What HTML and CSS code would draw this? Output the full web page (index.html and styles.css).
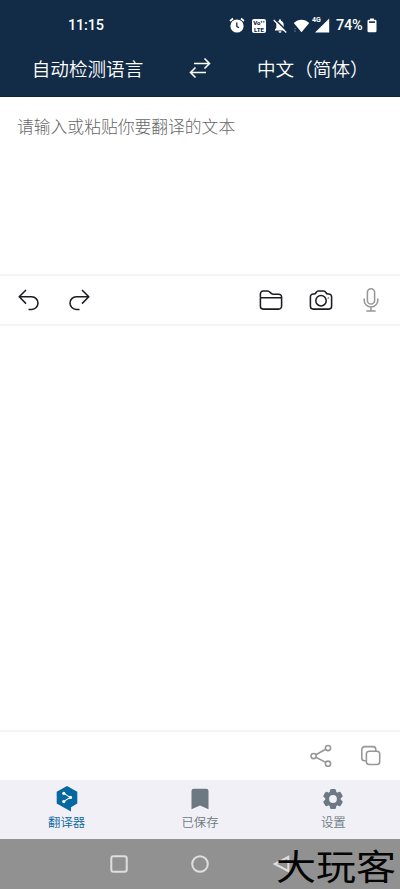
FILE: index.html
```html
<!DOCTYPE html>
<html lang="zh-CN">
<head>
<meta charset="utf-8">
<meta name="viewport" content="width=device-width, initial-scale=1">
<title>翻译器</title>
<link rel="stylesheet" href="styles.css">
</head>
<body>
<div class="app">
  <header class="header">
    <div class="status">
      <time class="clock">11:15</time>
      <div class="status-icons">
        <svg class="alarm" width="16" height="17" viewBox="0 0 16 17"><circle cx="8" cy="9" r="6.6" fill="#fff"/><path d="M1 4 4 1.5M15 4 12 1.5" stroke="#fff" stroke-width="1.7"/><path d="M7.8 5.5v3.8l2.2 1.5" fill="none" stroke="#122b46" stroke-width="1.3"/></svg>
        <span class="volte"><span>Vo¹¹</span><span>LTE</span></span>
        <svg class="bell" width="16" height="16" viewBox="0 0 16 16"><path d="M3 12.5v-1.2l1.3-1.3V6.8c0-2 1.1-3.5 2.7-4V1.5h2v1.3c1.6.5 2.7 2 2.7 4V10l1.3 1.3v1.2zM6.5 13.2h3a1.5 1.5 0 0 1-3 0z" fill="#fff"/><path d="M3 1.2 15.2 13.4" stroke="#122b46" stroke-width="1.5"/><path d="M1.7 2 14.2 14.5" stroke="#fff" stroke-width="1.3"/></svg>
        <svg class="wifi" width="17" height="14" viewBox="0 0 17 14"><path d="M.8 4.1C5-.4 12-.4 16.2 4.1L8.5 13.3z" fill="#fff"/><path d="M2 9v1.3M2 11.5v1.3" stroke="#8192a3"/></svg>
        <span class="signal"><svg width="16" height="15" viewBox="0 0 16 15"><path d="M15.2.5v14H1z" fill="#fff"/></svg><span class="network">4G</span></span>
        <span class="percent">74%</span>
        <svg class="battery" width="10" height="15" viewBox="0 0 10 15"><path d="M3 .5h4v1.3h1.2A1.3 1.3 0 0 1 9.5 3v10a1.3 1.3 0 0 1-1.3 1.3H1.8A1.3 1.3 0 0 1 .5 13V3a1.3 1.3 0 0 1 1.3-1.2H3z" fill="#fff"/><path d="M2 3.3h6v1.6H2z" fill="#122b46"/></svg>
      </div>
    </div>
    <div class="languages">
      <button class="lang source">自动检测语言</button>
      <svg class="swap" width="22" height="22" viewBox="0 0 22 22"><path d="M5 6.5h15.5M15.5 1.5l5 5-5 5M17 15.5H1.5M6.5 10.5l-5 5 5 5"/></svg>
      <button class="lang target">中文（简体）</button>
    </div>
  </header>
  <main class="editor">
    <p class="placeholder">请输入或粘贴你要翻译的文本</p>
    <div class="toolbar">
      <svg class="undo" width="24" height="24" viewBox="0 0 24 24"><path d="M9 2 2.2 8.8 9 15.6M2.5 8.8h12.2a6.3 6.3 0 0 1 0 12.6H11.5"/></svg>
      <svg class="redo" width="24" height="24" viewBox="0 0 24 24"><path d="m15 2 6.8 6.8-6.8 6.8M21.5 8.8H9.3a6.3 6.3 0 0 0 0 12.6h3.2"/></svg>
      <svg class="folder" width="24" height="24" viewBox="0 0 24 24"><path d="M1.4 9V5.8A2.8 2.8 0 0 1 4.2 3h4.3c2.7 0 3 3.2 5.6 3.2h5.7A2.8 2.8 0 0 1 22.6 9v9.3a2.8 2.8 0 0 1-2.8 2.8H4.2a2.8 2.8 0 0 1-2.8-2.8V9.8h21"/></svg>
      <svg class="camera" width="24" height="24" viewBox="0 0 24 24"><path d="M1.4 8.8A2.8 2.8 0 0 1 4.2 6h1c2 0 2-3 4-3h5.6c2 0 2 3 4 3h1a2.8 2.8 0 0 1 2.8 2.8v9.5a2.8 2.8 0 0 1-2.8 2.8H4.2a2.8 2.8 0 0 1-2.8-2.8z"/><circle cx="12" cy="12.7" r="5.2"/><path d="M18.8 10h.8"/></svg>
      <svg class="mic muted" width="24" height="26" viewBox="0 0 24 26"><rect x="8.4" y="1.7" width="7.2" height="15.3" rx="3.6"/><path d="M5.2 11.5v1.7a6.8 6.8 0 0 0 13.6 0v-1.7M12 20v4M7.3 24h9.4"/></svg>
    </div>
  </main>
  <section class="output">
    <div class="toolbar output-tools">
      <svg class="share muted" width="24" height="24" viewBox="0 0 24 24"><circle cx="4.6" cy="12" r="2.6"/><circle cx="19" cy="4" r="2.6"/><circle cx="19" cy="19.7" r="2.6"/><path d="m6.9 10.7 9.8-5.4M6.9 13.3l9.8 5.1"/></svg>
      <svg class="copy muted" width="24" height="24" viewBox="0 0 24 24"><path d="M6.9 16.8H5.6A2.8 2.8 0 0 1 2.8 14V5.4a2.8 2.8 0 0 1 2.8-2.8h8.4a2.8 2.8 0 0 1 2.8 2.8v1.5"/><rect x="7.4" y="7.2" width="13.3" height="13.3" rx="2.8"/></svg>
    </div>
  </section>
  <nav class="tabs">
    <a class="tab active"><svg width="22" height="26" viewBox="0 0 22 26"><path d="M11 0 21.3 5.8v11.6L15 21.2V25.5L.7 17.4V5.8z" fill="#0767a0"/><path d="m7.8 7.4 6.4 4-6.4 4" fill="none" stroke="#fff" stroke-width="1.1"/><g fill="#fff"><circle cx="7.8" cy="7.3" r="1.6"/><circle cx="14.5" cy="11.4" r="1.6"/><circle cx="7.8" cy="15.6" r="1.6"/></g></svg><span>翻译器</span></a>
    <a class="tab"><svg width="22" height="26" viewBox="0 0 22 26"><path d="M2.5 5a2.3 2.3 0 0 1 2.3-2.3h12.4A2.3 2.3 0 0 1 19.5 5v18.3L11 19.4l-8.5 3.9z" fill="#6c7982"/></svg><span>已保存</span></a>
    <a class="tab"><svg width="26" height="26" viewBox="0 0 26 26"><g fill="#6c7982"><circle cx="13" cy="13" r="7.8"/><g id="teeth"><rect x="9.9" y="3" width="6.2" height="20" rx="1.6"/><rect x="9.9" y="3" width="6.2" height="20" rx="1.6" transform="rotate(60 13 13)"/><rect x="9.9" y="3" width="6.2" height="20" rx="1.6" transform="rotate(120 13 13)"/></g></g><circle cx="13" cy="13" r="3.9" fill="#f1f0f6"/></svg><span>设置</span></a>
  </nav>
  <footer class="system">
    <svg class="recent" width="18" height="18" viewBox="0 0 18 18"><rect x="1.3" y="1.3" width="15.4" height="15.4" rx="2"/></svg>
    <svg class="home" width="18" height="18" viewBox="0 0 18 18"><circle cx="9" cy="9" r="7.8"/></svg>
    <svg class="back" width="17" height="18" viewBox="0 0 17 18"><path d="M15.3 2v14L1.8 9z"/></svg>
    <span class="watermark">大玩客</span>
  </footer>
</div>
</body>
</html>
```
FILE: styles.css
```css
* { box-sizing: border-box; }
body { margin: 0; background: #fff; font-family: Roboto, "Noto Sans CJK SC", sans-serif; }
svg { display: block; flex: none; }
.app { width: 400px; height: 889px; display: flex; flex-direction: column; overflow: hidden; }
.header { height: 97px; flex: none; background: #122b46; color: #fff; border-bottom: 1px solid #0b2039; }
.status { height: 50px; padding: 1px 23px 0 68px; display: flex; align-items: center; justify-content: space-between; }
.clock { font-size: 14.5px; font-weight: 500; letter-spacing: -.2px; }
.status-icons { display: flex; align-items: center; }
.volte { width: 14px; height: 14px; margin-left: 7px; border-radius: 2px; background: #fff; color: #122b46; display: flex; flex-direction: column; align-items: center; justify-content: center; font-size: 6px; line-height: 7px; font-weight: 900; }
.bell { margin-left: 6px; }
.wifi { margin-left: 5px; }
.signal { position: relative; margin-left: 4px; margin-right: 6px; }
.network { position: absolute; left: -2px; top: -2px; font-size: 7px; line-height: 8px; font-weight: 700; }
.percent { width: 27px; font-size: 14.5px; font-weight: 500; letter-spacing: -.2px; white-space: nowrap; margin-top: -1px; }
.clock { margin-top: -1px; }
.battery { margin-left: 4px; }
.languages { height: 38px; display: grid; grid-template-columns: 175px 50px 175px; align-items: center; justify-items: center; }
.lang { margin: -2px 0 0; padding: 0; border: 0; background: none; color: #fff; font: 350 18.6px/28px "Noto Sans CJK SC", sans-serif; white-space: nowrap; }
.target { justify-self: start; margin-left: 32px; }
.swap { fill: none; stroke: #fff; stroke-width: 1.6; margin-top: -2px; }
.editor { height: 229px; flex: none; display: flex; flex-direction: column; justify-content: space-between; border-bottom: 2px solid #f5f5f5; }
.placeholder { margin: 0; padding: 16px 17px 0; color: #666; font: 300 16.8px/26px "Noto Sans CJK SC", sans-serif; }
.toolbar { height: 50px; border-top: 2px solid #f5f5f5; display: flex; align-items: center; padding: 0 17px; }
.toolbar svg { fill: none; stroke: #1b1d22; stroke-width: 1.55; stroke-linejoin: round; }
.toolbar .muted { stroke: #979797; }
.redo { margin-left: 26px; }
.folder { margin-left: auto; }
.camera, .mic, .copy { margin-left: 26px; }
.output { flex: 1; display: flex; flex-direction: column; justify-content: flex-end; }
.output-tools { justify-content: flex-end; }
.tabs { height: 59px; flex: none; background: #f1f0f6; display: grid; grid-template-columns: repeat(3, 1fr); }
.tab { display: flex; flex-direction: column; align-items: center; padding-top: 6px; color: #6c7982; font: 350 12.4px/18px "Noto Sans CJK SC", sans-serif; }
.tab.active { color: #0767a0; }
.tab span { margin-top: 1px; }
.system { position: relative; height: 50px; flex: none; background: #919192; display: flex; align-items: center; padding-left: 110px; }
.system svg { fill: none; stroke: #dedede; stroke-width: 2; }
.home { margin-left: 63px; }
.back { margin-left: 64px; }
.watermark { position: absolute; left: 276px; top: 4px; font: 400 40px/44px "Noto Sans CJK SC", sans-serif; color: #050505; white-space: nowrap; transform: scaleY(.88); transform-origin: 50% 45%; }
```
